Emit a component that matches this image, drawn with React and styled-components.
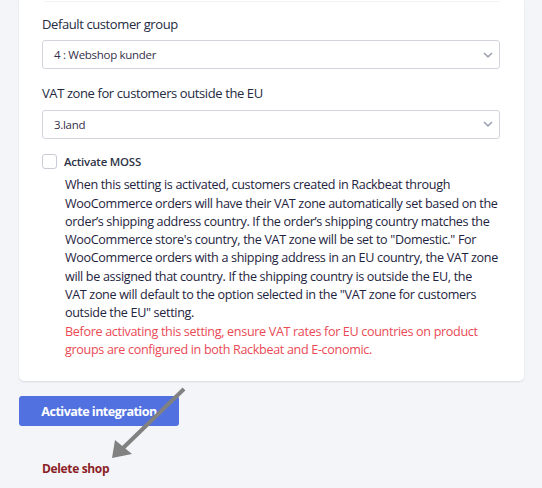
import React from "react";
import styled, { createGlobalStyle } from "styled-components";

const Global = createGlobalStyle`
  html, body { margin: 0; padding: 0; background: #f4f5f9; }
  body { font-family: "Open Sans", "Noto Sans", sans-serif; }
  * { box-sizing: border-box; }
`;

const Page = styled.div`
  position: relative;
  width: 542px;
  height: 488px;
  overflow: hidden;
  background: #f4f5f9;
  padding: 0 18px 0 19px;
`;

const Card = styled.div`
  background: #ffffff;
  border-radius: 0 0 5px 5px;
  box-shadow: 0 1px 2px rgba(20, 30, 60, 0.12);
  padding: 0 24px 22px 23px;
`;

const TopEdge = styled.div`
  height: 2px;
  margin-left: 2px;
  border-bottom: 1px solid #f2f3f6;
`;

const Label = styled.div`
  font-size: 13px;
  letter-spacing: -0.4px;
  color: #242a42;
  margin-top: ${(p) => p.$top}px;
  line-height: 18px;
`;

const SelectBox = styled.div`
  margin-top: 7.5px;
  height: 29px;
  border: 1px solid #d3d5de;
  border-radius: 3px;
  display: flex;
  align-items: center;
  justify-content: space-between;
  padding: 0 6px 0 11px;
  font-size: 11.5px;
  letter-spacing: -0.3px;
  color: #35304a;
`;

const CheckRow = styled.div`
  margin-top: 15.5px;
  height: 15px;
  display: flex;
  align-items: center;
  gap: 7px;
`;

const Box = styled.span`
  width: 15px;
  height: 15px;
  border: 1px solid #c9ccd6;
  border-radius: 3px;
  background: #fff;
`;

const CheckLabel = styled.span`
  font-size: 11.4px;
  letter-spacing: -0.2px;
  color: #2e3346;
  font-weight: 600;
`;

const Help = styled.div`
  margin: 7px 0 0 23px;
  font-size: 12.6px;
  letter-spacing: -0.34px;
  line-height: 18.3px;
  color: #1e2440;
`;

const Line = styled.span`
  display: block;
  white-space: nowrap;
  color: ${(p) => (p.$warn ? "#ea4a55" : "inherit")};
`;

const Actions = styled.div`
  padding-top: 15px;
  display: flex;
  flex-direction: column;
  align-items: flex-start;
`;

const Button = styled.button`
  width: 160px;
  height: 30px;
  border: none;
  border-radius: 3px;
  background: #5171e0;
  color: #fff;
  font-family: inherit;
  font-weight: 700;
  font-size: 12.6px;
  letter-spacing: -0.55px;
  padding: 0;
`;

const DeleteLink = styled.a`
  margin: 34px 0 0 23px;
  color: #8b1f27;
  font-weight: 700;
  font-size: 12px;
  letter-spacing: -0.35px;
`;

const Arrow = styled.svg`
  position: absolute;
  left: 0;
  top: 0;
  pointer-events: none;
`;

const helpLines = [
  "When this setting is activated, customers created in Rackbeat through",
  "WooCommerce orders will have their VAT zone automatically set based on the",
  "order’s shipping address country. If the order’s shipping country matches the",
  "WooCommerce store's country, the VAT zone will be set to \"Domestic.\" For",
  "WooCommerce orders with a shipping address in an EU country, the VAT zone",
  "will be assigned that country. If the shipping country is outside the EU, the",
  "VAT zone will default to the option selected in the \"VAT zone for customers",
  "outside the EU\" setting.",
];

const warnLines = [
  "Before activating this setting, ensure VAT rates for EU countries on product",
  "groups are configured in both Rackbeat and E-conomic.",
];

export default function App() {
  return (
    <>
      <Global />
      <Page>
        <Card>
          <TopEdge />
          <Label $top={12.5}>Default customer group</Label>
          <SelectBox>
            <span>4 : Webshop kunder</span>
            <Chevron />
          </SelectBox>
          <Label $top={15.3}>VAT zone for customers outside the EU</Label>
          <SelectBox>
            <span>3.land</span>
            <Chevron />
          </SelectBox>
          <CheckRow>
            <Box />
            <CheckLabel>Activate MOSS</CheckLabel>
          </CheckRow>
          <Help>
            {helpLines.map((l) => (
              <Line key={l}>{l}</Line>
            ))}
            {warnLines.map((l) => (
              <Line key={l} $warn>
                {l}
              </Line>
            ))}
          </Help>
        </Card>
        <Actions>
          <Button>Activate integration</Button>
          <DeleteLink>Delete shop</DeleteLink>
        </Actions>
        <Arrow width="542" height="488" viewBox="0 0 542 488">
          <line x1="184" y1="389" x2="122" y2="449" stroke="#818181" strokeWidth="4" />
          <polygon points="112,458 115,440 132,454" fill="#818181" />
        </Arrow>
      </Page>
    </>
  );
}

function Chevron() {
  return (
    <svg width="10" height="6" viewBox="0 0 10 6">
      <path d="M1 1 L5 4.8 L9 1" fill="none" stroke="#9ea3b3" strokeWidth="1.6" />
    </svg>
  );
}
